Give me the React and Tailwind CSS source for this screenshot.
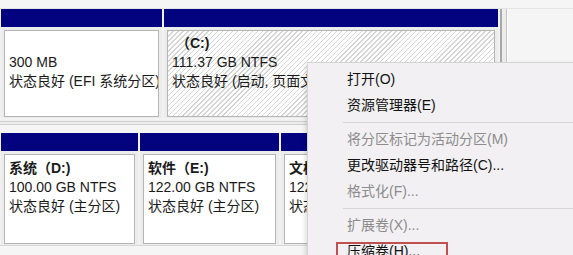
import React from 'react';

const hatch =
  'bg-[repeating-linear-gradient(135deg,#d4d4d4_0px,#d4d4d4_1px,#ffffff_1px,#ffffff_3.5px)]';

function Partition({ width, label, size, status, hatched, pt }) {
  return (
    <div className="flex flex-col shrink-0" style={{ width }}>
      <div className="h-[18px] bg-[#03037f]" />
      <div className="flex-1 bg-[#ececec] px-[3px] pt-[3px] pb-[1px] flex">
        <div
          className={`flex-1 border border-[#b4b4b4] overflow-hidden whitespace-nowrap ${hatched ? hatch : 'bg-white'} ${pt} pl-[4px] text-[14px] leading-[19px] text-[#1a1a1a]`}
        >
          <div className="font-bold h-[19px]">{label}</div>
          <div>{size}</div>
          <div>{status}</div>
        </div>
      </div>
    </div>
  );
}

function MenuItem({ text, disabled, boxed }) {
  return (
    <div className="h-[26px] flex items-center pl-[39px] relative">
      {boxed && (
        <div className="absolute left-[28px] top-[4px] w-[112px] h-[30px] border-2 border-[#c0504d]" />
      )}
      <span className={disabled ? 'text-[#8c8c8c]' : 'text-[#111]'}>{text}</span>
    </div>
  );
}

function Sep() {
  return (
    <div className="h-[8px] flex items-center pl-[35px]">
      <div className="flex-1 h-px bg-[#d6d6d6]" />
    </div>
  );
}

export default function App() {
  return (
    <div className="relative w-[573px] h-[255px] overflow-hidden bg-[#f2f2f2] font-['Liberation_Sans','Noto_Sans_CJK_SC',sans-serif]">
      <div className="h-[9px] bg-[#f5f5f5] border-b border-[#e4e4e4]" />

      {/* row 1 */}
      <div className="flex h-[109px] gap-[2px] pl-[1px]">
        <Partition width={161} label="" size="300 MB" status="状态良好 (EFI 系统分区)" pt="pt-[3px]" />
        <Partition width={334} label={'\u00a0（C:)'} size="111.37 GB NTFS" status="状态良好 (启动, 页面文件, 故障转储, 主分区)" hatched pt="pt-[3px]" />
        <div className="flex-1 flex">
          <div className="w-[2px] bg-[#a8a8a8]" />
          <div className="w-[4px] bg-[#ececec]" />
          <div className="w-px bg-[#c4c4c4]" />
          <div className="flex-1 bg-[#f5f5f5] border-l border-white" />
        </div>
      </div>

      {/* row divider */}
      <div className="h-[15px] flex flex-col">
        <div className="h-[3px]" />
        <div className="h-px bg-[#cfcfcf]" />
        <div className="h-[2px] bg-[#ececec]" />
        <div className="h-px bg-[#cfcfcf]" />
        <div className="flex-1 bg-[#f5f5f5]" />
      </div>

      {/* row 2 */}
      <div className="flex h-[112px] gap-[2px] pl-[1px]">
        <Partition width={137} label="系统（D:)" size="100.00 GB NTFS" status="状态良好 (主分区)" pt="pt-[4px]" />
        <Partition width={139} label="软件（E:)" size="122.00 GB NTFS" status="状态良好 (主分区)" pt="pt-[4px]" />
        <Partition width={160} label="文档（F:)" size="122.00 GB NTFS" status="状态良好 (主分区)" pt="pt-[4px]" />
      </div>
      <div className="h-[10px] border-t border-[#d8d8d8] bg-[#f5f5f5]" />

      {/* context menu */}
      <div className="absolute left-[307px] top-[62px] w-[280px] h-[210px] bg-[#f2f0f2] border border-[#d4d4d4] shadow-[-2px_2px_4px_rgba(0,0,0,0.12)] pt-[3px] text-[14px]">
        <MenuItem text="打开(O)" />
        <MenuItem text="资源管理器(E)" />
        <Sep />
        <MenuItem text="将分区标记为活动分区(M)" disabled />
        <MenuItem text="更改驱动器号和路径(C)..." />
        <MenuItem text="格式化(F)..." disabled />
        <Sep />
        <MenuItem text="扩展卷(X)..." disabled />
        <MenuItem text="压缩卷(H)..." boxed />
      </div>
    </div>
  );
}
